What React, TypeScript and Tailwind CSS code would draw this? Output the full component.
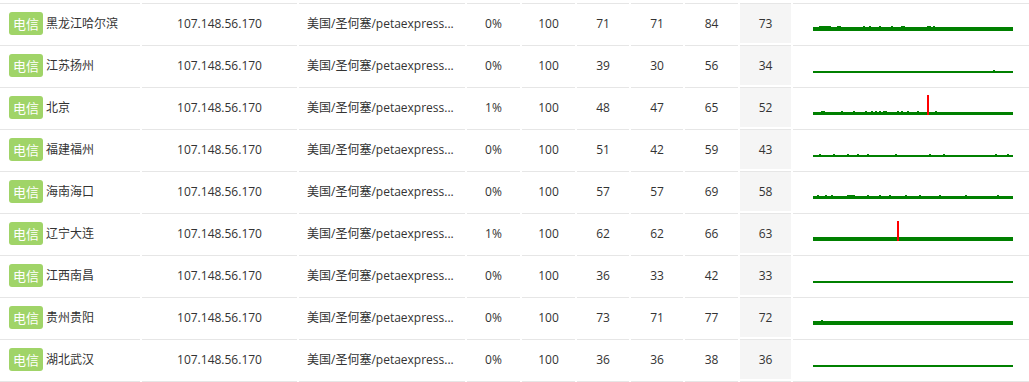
type Row = {
  name: string;
  loss: string;
  sent: number;
  last: number;
  min: number;
  max: number;
  avg: number;
  base: number;
  bumps: number[];
  red: number[];
};

const rows: Row[] = [
  { name: "黑龙江哈尔滨", loss: "0%", sent: 100, last: 71, min: 71, max: 84, avg: 73, base: 4, bumps: [3, 4, 5, 6, 7, 8, 12, 13, 25, 28, 33, 39, 44, 45, 57, 58, 60], red: [] },
  { name: "江苏扬州", loss: "0%", sent: 100, last: 39, min: 30, max: 56, avg: 34, base: 2, bumps: [90], red: [] },
  { name: "北京", loss: "1%", sent: 100, last: 48, min: 47, max: 65, avg: 52, base: 3, bumps: [4, 5, 14, 20, 26, 29, 31, 33, 35, 36, 42, 44, 47, 52, 61], red: [57] },
  { name: "福建福州", loss: "0%", sent: 100, last: 51, min: 42, max: 59, avg: 43, base: 2, bumps: [3, 10, 17, 22, 27, 41, 58, 65, 91, 97], red: [] },
  { name: "海南海口", loss: "0%", sent: 100, last: 57, min: 57, max: 69, avg: 58, base: 3, bumps: [2, 6, 9, 17, 18, 19, 20, 27, 33, 38, 46, 53, 63, 76, 92], red: [] },
  { name: "辽宁大连", loss: "1%", sent: 100, last: 62, min: 62, max: 66, avg: 63, base: 4, bumps: [], red: [42] },
  { name: "江西南昌", loss: "0%", sent: 100, last: 36, min: 33, max: 42, avg: 33, base: 2, bumps: [], red: [] },
  { name: "贵州贵阳", loss: "0%", sent: 100, last: 73, min: 71, max: 77, avg: 72, base: 4, bumps: [4], red: [] },
  { name: "湖北武汉", loss: "0%", sent: 100, last: 36, min: 36, max: 38, avg: 36, base: 2, bumps: [], red: [] },
];

function Spark({ row }: { row: Row }) {
  const bars = [];
  for (let i = 0; i < 100; i++) {
    if (row.red.includes(i)) {
      bars.push(<rect key={i} x={i * 2} y={0} width={2} height={20} fill="#ff0000" />);
      continue;
    }
    const h = row.base + (row.bumps.includes(i) ? 1 : 0);
    bars.push(<rect key={i} x={i * 2} y={20 - h} width={2} height={h} fill="#008000" />);
  }
  return (
    <svg width="200" height="20" viewBox="0 0 200 20" shapeRendering="crispEdges" className="block">
      {bars}
    </svg>
  );
}

const td = "p-0 border-t border-[#e6e6e6] align-middle";

export default function App() {
  return (
    <div className="w-full h-[382px] overflow-hidden bg-white">
      <table className="table-fixed border-separate border-spacing-[2px] w-[1033px] ml-[-2px] mt-[1px] text-[12px] text-[#333] font-['Open_Sans','Noto_Sans_CJK_SC',sans-serif]">
        <colgroup>
          <col className="w-[140px]" />
          <col className="w-[155px]" />
          <col className="w-[166px]" />
          <col className="w-[53px]" />
          <col className="w-[53px]" />
          <col className="w-[52px]" />
          <col className="w-[52px]" />
          <col className="w-[53px]" />
          <col className="w-[51px]" />
          <col className="w-[236px]" />
        </colgroup>
        <tbody>
          {rows.map((r) => (
            <tr key={r.name}>
              <td className={td}>
                <div className="h-[39px] flex items-center pl-[9px] gap-[3px]">
                  <span className="h-[23px] px-[4px] rounded-[3px] bg-[#a0d468] text-white text-[13px] leading-[23px] font-['Noto_Sans_CJK_SC',sans-serif]">
                    电信
                  </span>
                  <span className="whitespace-nowrap">{r.name}</span>
                </div>
              </td>
              <td className={td}>
                <div className="h-[39px] flex items-center justify-center">107.148.56.170</div>
              </td>
              <td className={td}>
                <div className="h-[39px] flex items-center px-[8px]">
                  <span className="truncate">美国/圣何塞/petaexpress...</span>
                </div>
              </td>
              <td className={td}>
                <div className="h-[39px] flex items-center justify-center">{r.loss}</div>
              </td>
              <td className={td}>
                <div className="h-[39px] flex items-center justify-center">{r.sent}</div>
              </td>
              <td className={td}>
                <div className="h-[39px] flex items-center justify-center">{r.last}</div>
              </td>
              <td className={td}>
                <div className="h-[39px] flex items-center justify-center">{r.min}</div>
              </td>
              <td className={td}>
                <div className="h-[39px] flex items-center justify-center">{r.max}</div>
              </td>
              <td className={td + " bg-[#f5f5f5]"}>
                <div className="h-[39px] flex items-center justify-center">{r.avg}</div>
              </td>
              <td className={td}>
                <div className="h-[39px] pl-[20px] pt-[7px]">
                  <Spark row={r} />
                </div>
              </td>
            </tr>
          ))}
          {/* next row, cut off by the window */}
          <tr>
            {Array.from({ length: 10 }).map((_, i) => (
              <td key={i} className={td}>
                <div className="h-[39px]" />
              </td>
            ))}
          </tr>
        </tbody>
      </table>
    </div>
  );
}
